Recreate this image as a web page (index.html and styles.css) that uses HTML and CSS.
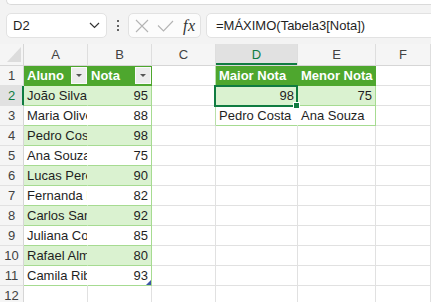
FILE: index.html
```html
<!DOCTYPE html>
<html lang="pt">
<head>
<meta charset="utf-8">
<title>Planilha</title>
<link rel="stylesheet" href="styles.css">
</head>
<body>
<div class="ribbon"></div>
<div class="fbar">
  <div class="namebox">
    <span class="nb-text">D2</span>
    <svg class="chev" width="11" height="7" viewBox="0 0 11 7"><polyline points="1,1 5.5,5.5 10,1" fill="none" stroke="#333" stroke-width="1.2"/></svg>
  </div>
  <div class="dots"><i></i><i></i><i></i></div>
  <div class="fbtns">
    <svg class="ico-x" width="14" height="14" viewBox="0 0 14 14"><path d="M1 1 L13 13 M13 1 L1 13" stroke="#b4b4b4" stroke-width="1.1" fill="none"/></svg>
    <svg class="ico-ok" width="17" height="12" viewBox="0 0 17 12"><polyline points="1,5.5 6.5,11 16,1" fill="none" stroke="#b4b4b4" stroke-width="1.1"/></svg>
    <span class="fx">fx</span>
  </div>
  <div class="finput">=MÁXIMO(Tabela3[Nota])</div>
</div>
<div class="sheet">
  <div class="c corner"><svg width="24" height="21" viewBox="0 0 24 21"><polygon points="21,3 21,18 7,18" fill="#dcdcdc"/></svg></div>
  <div class="c ch">A</div>
  <div class="c ch">B</div>
  <div class="c ch">C</div>
  <div class="c ch selc">D</div>
  <div class="c ch">E</div>
  <div class="c ch">F</div>

  <div class="c rh">1</div>
  <div class="c th">Aluno<span class="filt"></span></div>
  <div class="c th">Nota<span class="filt"></span></div>
  <div class="c gedge"></div>
  <div class="c th">Maior Nota</div>
  <div class="c th">Menor Nota</div>
  <div class="c"></div>

  <div class="c rh selr">2</div>
  <div class="c tb">João Silva</div>
  <div class="c tb te num">95</div>
  <div class="c gedge"></div>
  <div class="c tb num">98</div>
  <div class="c tb te num">75</div>
  <div class="c"></div>

  <div class="c rh">3</div>
  <div class="c tw">Maria Oliveira</div>
  <div class="c tw te num">88</div>
  <div class="c gedge"></div>
  <div class="c tw">Pedro Costa</div>
  <div class="c tw te">Ana Souza</div>
  <div class="c"></div>

  <div class="c rh">4</div>
  <div class="c tb">Pedro Costa</div>
  <div class="c tb te num">98</div>
  <div class="c"></div><div class="c"></div><div class="c"></div><div class="c"></div>

  <div class="c rh">5</div>
  <div class="c tw">Ana Souza</div>
  <div class="c tw te num">75</div>
  <div class="c"></div><div class="c"></div><div class="c"></div><div class="c"></div>

  <div class="c rh">6</div>
  <div class="c tb">Lucas Pereira</div>
  <div class="c tb te num">90</div>
  <div class="c"></div><div class="c"></div><div class="c"></div><div class="c"></div>

  <div class="c rh">7</div>
  <div class="c tw">Fernanda Lima</div>
  <div class="c tw te num">82</div>
  <div class="c"></div><div class="c"></div><div class="c"></div><div class="c"></div>

  <div class="c rh">8</div>
  <div class="c tb">Carlos Santos</div>
  <div class="c tb te num">92</div>
  <div class="c"></div><div class="c"></div><div class="c"></div><div class="c"></div>

  <div class="c rh">9</div>
  <div class="c tw">Juliana Costa</div>
  <div class="c tw te num">85</div>
  <div class="c"></div><div class="c"></div><div class="c"></div><div class="c"></div>

  <div class="c rh">10</div>
  <div class="c tb">Rafael Almeida</div>
  <div class="c tb te num">80</div>
  <div class="c"></div><div class="c"></div><div class="c"></div><div class="c"></div>

  <div class="c rh">11</div>
  <div class="c tw">Camila Ribeiro</div>
  <div class="c tw te num last">93<span class="resize"></span></div>
  <div class="c"></div><div class="c"></div><div class="c"></div><div class="c"></div>

  <div class="c rh">12</div>
  <div class="c"></div><div class="c"></div><div class="c"></div><div class="c"></div><div class="c"></div><div class="c"></div>

  <div class="selbox"></div>
  <div class="handle"></div>
</div>
</body>
</html>
```
FILE: styles.css
```css
html, body {
  margin: 0;
  padding: 0;
}
body {
  width: 431px;
  height: 302px;
  overflow: hidden;
  background: #f3f3f3;
  font-family: "Liberation Sans", Arial, sans-serif;
  color: #1f1f1f;
}
.ribbon {
  height: 4px;
  margin-left: 6px;
  background: #ffffff;
  border-left: 1px solid #dadada;
  border-bottom: 1px solid #dadada;
  border-bottom-left-radius: 7px;
}
.fbar {
  display: flex;
  align-items: center;
  height: 25px;
  padding: 8px 0 6px 6px;
}
.namebox {
  box-sizing: border-box;
  width: 101px;
  height: 25px;
  background: #fff;
  border: 1px solid #e2e2e2;
  border-radius: 5px;
  display: flex;
  align-items: center;
  justify-content: space-between;
  padding: 0 6px 0 6px;
}
.nb-text {
  font-size: 13px;
  color: #1f1f1f;
}
.chev {
  display: block;
}
.dots {
  width: 21px;
  display: flex;
  flex-direction: column;
  align-items: center;
  gap: 2.5px;
}
.dots i {
  display: block;
  width: 2px;
  height: 2px;
  background: #333;
  border-radius: 1px;
}
.fbtns {
  box-sizing: border-box;
  width: 73px;
  height: 25px;
  background: #fcfcfc;
  border: 1px solid #e2e2e2;
  border-radius: 5px;
  display: flex;
  align-items: center;
  padding-left: 6px;
}
.ico-x {
  display: block;
}
.ico-ok {
  display: block;
  margin-left: 8px;
}
.fx {
  margin-left: 9px;
  font-family: "Liberation Serif", "Times New Roman", serif;
  font-style: italic;
  font-size: 16px;
  color: #333;
  letter-spacing: 0.5px;
}
.finput {
  box-sizing: border-box;
  flex: 1;
  height: 25px;
  margin-left: 5px;
  margin-right: -10px;
  background: #fff;
  border: 1px solid #e2e2e2;
  border-radius: 5px;
  padding-left: 9px;
  font-size: 13px;
  line-height: 23px;
  color: #1f1f1f;
  white-space: nowrap;
}
.sheet {
  position: relative;
  display: grid;
  grid-template-columns: 24px 64px 64px 64px 82px 78px 1fr;
  grid-template-rows: 22px;
  grid-auto-rows: 20px;
  background: #fff;
}
.c {
  box-sizing: border-box;
  position: relative;
  border-right: 1px solid #e1e1e1;
  border-bottom: 1px solid #e1e1e1;
  background: #fff;
  font-size: 13px;
  line-height: 16px;
  padding: 2px 3px 0 3px;
  white-space: nowrap;
  overflow: hidden;
  color: #1f1f1f;
}
.corner {
  padding: 0;
  background: #f5f5f5;
  border-right-color: #d6d6d6;
  border-bottom-color: #d6d6d6;
}
.corner svg {
  display: block;
}
.ch {
  background: #f5f5f5;
  border-right-color: #dedede;
  border-bottom-color: #d6d6d6;
  text-align: center;
  color: #424242;
  padding-top: 3px;
}
.rh {
  background: #f5f5f5;
  border-right-color: #d6d6d6;
  border-bottom-color: #e1e1e1;
  text-align: center;
  color: #424242;
  padding: 2px 0 0 0;
}
.selc {
  background: #e1e1e1;
  color: #107c41;
  box-shadow: inset 0 -2px 0 #107c41;
}
.selr {
  background: #e1e1e1;
  color: #107c41;
  box-shadow: inset -1px 0 0 #107c41;
  border-right-color: #107c41;
}
.th {
  background: #4ea72e;
  border-right-color: #4ea72e;
  border-bottom-color: #4ea72e;
  color: #fff;
  font-weight: bold;
}
.tb {
  background: #daf2d0;
  border-right-color: #daf2d0;
  border-bottom-color: #a6db91;
}
.tw {
  background: #fff;
  border-right-color: #fff;
  border-bottom-color: #a6db91;
}
.te {
  border-right-color: #a6db91;
}
.gedge {
  border-right-color: #b9dfa9;
}
.num {
  text-align: right;
}
.filt {
  position: absolute;
  right: 0;
  top: 1px;
  box-sizing: border-box;
  width: 16px;
  height: 17px;
  background: #ececec;
  border: 1px solid #fafafa;
}
.filt::after {
  content: "";
  position: absolute;
  left: 4px;
  top: 6px;
  width: 0;
  height: 0;
  border-left: 3px solid transparent;
  border-right: 3px solid transparent;
  border-top: 3px solid #555;
}
.resize {
  position: absolute;
  right: 0;
  bottom: 0;
  width: 0;
  height: 0;
  border-left: 5px solid transparent;
  border-bottom: 5px solid #3d55a6;
}
.selbox {
  position: absolute;
  left: 214px;
  top: 41px;
  width: 84px;
  height: 22px;
  box-sizing: border-box;
  border: 2px solid #107c41;
}
.handle {
  position: absolute;
  left: 293px;
  top: 58px;
  width: 5px;
  height: 5px;
  background: #107c41;
  border: 1px solid #fff;
}
```
